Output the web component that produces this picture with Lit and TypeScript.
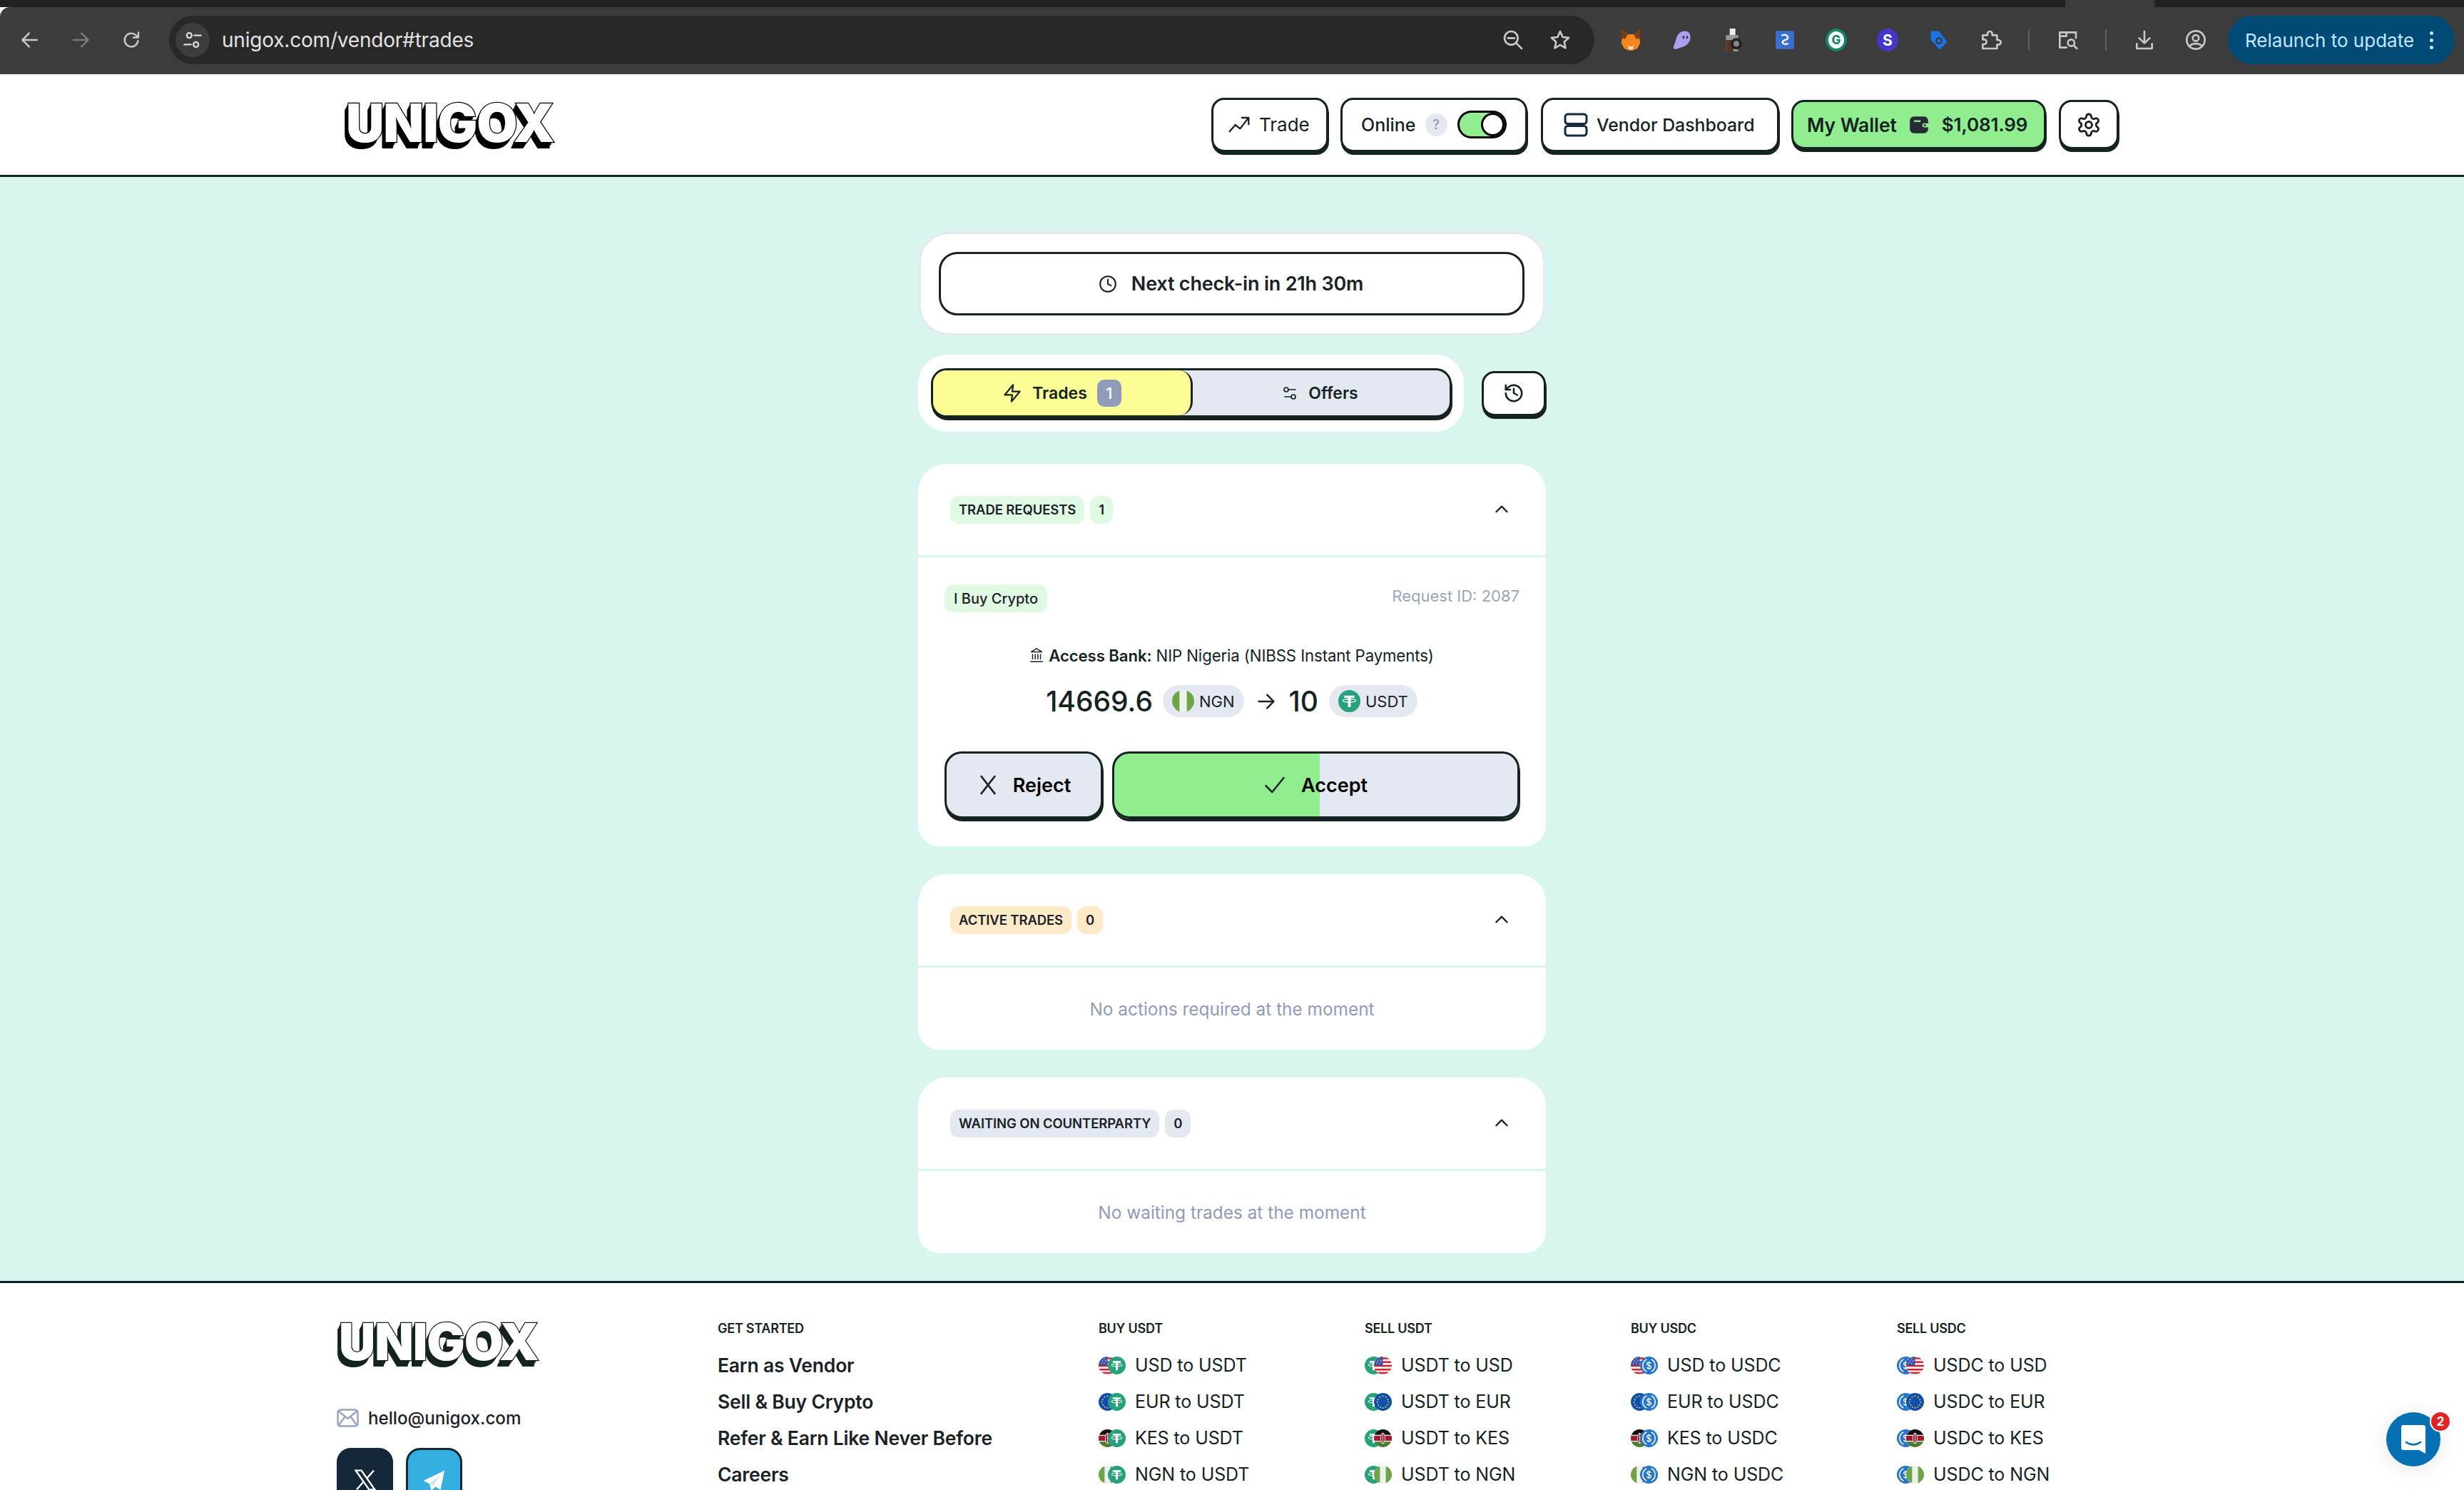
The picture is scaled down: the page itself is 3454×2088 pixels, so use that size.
import { LitElement, html, css, svg } from "lit";
import { customElement } from "lit/decorators.js";

const ic = (body: unknown, size: number, stroke = "currentColor", sw = 2, cls = "") => html`<svg class=${cls} width=${size} height=${size} viewBox="0 0 24 24" fill="none" stroke=${stroke} stroke-width=${sw} stroke-linecap="round" stroke-linejoin="round">${body}</svg>`;

const I = {
  back: svg`<path d="M20 12H4M11 4.500 3.500 12l7.500 7.500"/>`,
  forward: svg`<path d="M4 12h16M13 4.500l7.500 7.500-7.500 7.500"/>`,
  reload: svg`<path d="M19.500 13a7.500 7.500 0 1 1-2.200-6.300L20 9.200M20 3.500v5.700h-5.700"/>`,
  tune: svg`<circle cx="8" cy="6.500" r="3"/><path d="M14 6.500h8M2 17.500h8"/><circle cx="16" cy="17.500" r="3"/>`,
  zoom: svg`<circle cx="10" cy="10" r="7"/><path d="M6.500 10h7M15.500 15.500 21 21"/>`,
  star: svg`<path d="m12 3 2.700 6 6.300.7-4.700 4.300 1.300 6.500L12 17.200 6.400 20.500l1.300-6.500L3 9.700 9.300 9z"/>`,
  puzzle: svg`<path d="M4 7h5V5.500a2.500 2.500 0 0 1 5 0V7h5v5h1.500a2.500 2.500 0 0 1 0 5H19v4H4v-4.500h1.500a2.500 2.500 0 0 0 0-5H4z"/>`,
  tabSearch: svg`<path d="M11 20H4V4h17v6M4 8h7V4"/><circle cx="16" cy="15" r="3.500"/><path d="m19 18 3 3"/>`,
  download: svg`<path d="M12 3v12M6.500 10l5.500 5.500 5.500-5.500M4 16v5h16v-5"/>`,
  profile: svg`<circle cx="12" cy="12" r="9.500"/><circle cx="12" cy="10" r="3.200"/><path d="M5.500 18.500c3-3.500 10-3.500 13 0"/>`,
  trend: svg`<path d="M2 19l6-7 5 4 8.500-11M15 4.500h7v7"/>`,
  server: svg`<rect x="2" y="2" width="20" height="9" rx="2.500"/><rect x="2" y="13" width="20" height="9" rx="2.500"/>`,
  gear: svg`<path d="M12.220 2h-.44a2 2 0 0 0-2 2v.18a2 2 0 0 1-1 1.730l-.43.25a2 2 0 0 1-2 0l-.15-.08a2 2 0 0 0-2.730.730l-.22.380a2 2 0 0 0 .730 2.730l.15.1a2 2 0 0 1 1 1.720v.51a2 2 0 0 1-1 1.740l-.15.090a2 2 0 0 0-.730 2.730l.22.380a2 2 0 0 0 2.730.730l.15-.08a2 2 0 0 1 2 0l.43.25a2 2 0 0 1 1 1.730V20a2 2 0 0 0 2 2h.44a2 2 0 0 0 2-2v-.18a2 2 0 0 1 1-1.730l.43-.25a2 2 0 0 1 2 0l.15.08a2 2 0 0 0 2.730-.730l.22-.39a2 2 0 0 0-.730-2.730l-.15-.08a2 2 0 0 1-1-1.740v-.5a2 2 0 0 1 1-1.740l.15-.09a2 2 0 0 0 .730-2.730l-.22-.38a2 2 0 0 0-2.730-.730l-.15.08a2 2 0 0 1-2 0l-.43-.25a2 2 0 0 1-1-1.730V4a2 2 0 0 0-2-2z"/><circle cx="12" cy="12" r="3"/>`,
  clock: svg`<circle cx="12" cy="12" r="10"/><path d="M12 6v6l4 2"/>`,
  zap: svg`<path d="M13 2 3 14h9l-1 8 10-12h-9z"/>`,
  sliders: svg`<path d="M20 7h-9M14 17H5"/><circle cx="17" cy="17" r="3"/><circle cx="7" cy="7" r="3"/>`,
  history: svg`<path d="M3 12a9 9 0 1 0 9-9 9.750 9.750 0 0 0-6.740 2.740L3 8"/><path d="M3 3v5h5M12 7v5l4 2"/>`,
  chevron: svg`<path d="m5 15 7-7 7 7"/>`,
  bank: svg`<path d="M3 22h18M6 18v-7M10 18v-7M14 18v-7M18 18v-7M12 2l8 5H4z"/>`,
  arrow: svg`<path d="M3 12h18M13 4l8 8-8 8"/>`,
  x: svg`<path d="M5 3l14 18M19 3 5 21"/>`,
  check: svg`<path d="M2 13l7 7L22 4"/>`,
};

const usd = svg`<g>
  <rect width="24" height="24" fill="#f5f5f5"/>
  <path d="M0 2.500h24M0 7.500h24M0 12.500h24M0 17.500h24M0 22h24" stroke="#d8202f" stroke-width="2.400"/>
  <rect width="12" height="12" fill="#3a53a4"/>
  <path d="M3 3h1M7 3h1M5 6h1M9 6h1M3 9h1M7 9h1" stroke="#fff" stroke-width="1.300"/></g>`;
const eur = svg`<g>
  <rect width="24" height="24" fill="#0b4fb3"/>
  ${[[12,4],[16,5.500],[18.500,9],[19.500,12.500],[18,16],[15.500,19],[12,20],[8.500,19],[6,16],[4.500,12.500],[5.500,9],[8,5.500]].map(([x,y]) => svg`<circle cx=${x} cy=${y} r="1" fill="#f5c518"/>`)}</g>`;
const kes = svg`<g>
  <rect width="24" height="8" fill="#111"/><rect y="8" width="24" height="8" fill="#a3182b"/><rect y="16" width="24" height="8" fill="#4d7c2e"/>
  <path d="M0 8h24M0 16h24" stroke="#fff" stroke-width="1.200"/>
  <ellipse cx="12" cy="12" rx="3" ry="7" fill="#a3182b" stroke="#fff" stroke-width=".9"/><path d="M12 5v14" stroke="#fff" stroke-width=".8"/></g>`;
const ngn = svg`<g><rect width="24" height="24" fill="#eef0ee"/><rect width="8" height="24" fill="#6da544"/><rect x="16" width="8" height="24" fill="#6da544"/></g>`;
const usdt = svg`<g><rect width="24" height="24" fill="#26a17b"/>
  <path d="M6.500 6h11v2.500h-4v10h-3v-10h-4z" fill="#fff"/>
  <ellipse cx="12" cy="11.500" rx="7" ry="1.700" fill="none" stroke="#fff" stroke-width="1"/></g>`;
const usdc = svg`<g><rect width="24" height="24" fill="#2775ca"/>
  <path d="M9 3.800a9 9 0 0 0 0 16.400M15 3.800a9 9 0 0 1 0 16.400" fill="none" stroke="#fff" stroke-width="1.500"/>
  <path d="M14.800 9.500c-.5-1.200-1.500-1.700-2.800-1.700-1.500 0-2.700.8-2.700 2.100 0 3 5.600 1.300 5.600 4.200 0 1.300-1.300 2.100-2.900 2.100-1.400 0-2.500-.6-3-1.800M12 6.500v11" fill="none" stroke="#fff" stroke-width="1.200"/></g>`;

let uid = 0;
const coin = (art: unknown, size: number, cls = "") => {
  const id = `c${uid++}`;
  return html`<svg class=${cls} width=${size} height=${size} viewBox="0 0 24 24"><defs><clipPath id=${id}><circle cx="12" cy="12" r="12"/></clipPath></defs><g clip-path=${`url(#${id})`}>${art}</g></svg>`;
};

const CUR: Record<string, unknown> = { USD: usd, EUR: eur, KES: kes, NGN: ngn, USDT: usdt, USDC: usdc };

@customElement("app-root")
export class AppRoot extends LitElement {
  static styles = css`
    :host { display: block; position: relative; height: 100vh; overflow: hidden; font-family: Inter, "Liberation Sans", sans-serif; color: #14231f; background: #fff; }
    * { box-sizing: border-box; }
    svg { display: block; flex: none; }

    .strip { height: 10px; background: #202322; display: flex; justify-content: flex-end; }
    .strip-gap { width: 125px; margin-right: 434px; background: #3c3c3c; }
    .toolbar { height: 94px; background: #3c3c3c; display: flex; align-items: center; padding-bottom: 2px; border-radius: 14px 0 0 0; color: #c7c7c7; }
    .nav { width: 71px; display: flex; justify-content: center; }
    .nav.first { width: 77px; padding-left: 6px; }
    .nav.off { color: #7a7a7a; }
    .nav.last { margin-right: 18px; }
    .omni { width: 1998px; height: 68px; border-radius: 34px; background: #282828; display: flex; align-items: center; padding: 0 15px 0 9px; }
    .site { width: 48px; height: 48px; border-radius: 50%; background: #3c3c3c; display: flex; align-items: center; justify-content: center; color: #dcdcdc; margin-right: 17px; }
    .url { font-size: 28px; color: #e3e3e3; flex: 1; letter-spacing: -.2px; }
    .omni-ic { width: 66px; display: flex; justify-content: center; color: #c7c7c7; }
    .exts { display: flex; align-items: center; padding-left: 15px; }
    .ext { width: 72px; display: flex; justify-content: center; align-items: center; }
    .sep { width: 2px; height: 30px; background: #5f5f5f; margin: 0 17px; }
    .ext-s { width: 30px; height: 32px; border-radius: 50%; display: flex; align-items: center; justify-content: center; color: #fff; font-weight: 700; font-size: 21px; }
    .ext-s.g { background: #fff; color: #0f8a6e; border: 4px solid #11846b; font-size: 17px; font-weight: 800; }
    .ext-s.s { background: #4338ca; }
    .relaunch { margin-left: 9px; width: 318px; height: 68px; border-radius: 34px; background: #004a77; color: #c2e7ff; font-size: 26px; display: flex; align-items: center; justify-content: space-between; padding: 0 30px 0 24px; }
    .dots { display: flex; flex-direction: column; gap: 5px; }
    .dots i { width: 5px; height: 5px; border-radius: 50%; background: #c2e7ff; display: block; }

    .hdr { height: 144px; border-bottom: 3px solid #14231f; display: flex; align-items: center; justify-content: space-between; padding: 0 484px 0 485px; background: #fff; }
    .logo { font-family: Inter, "Liberation Sans", sans-serif; font-weight: 900; letter-spacing: -.015em; color: #fff; -webkit-text-stroke: 2.500px #000; paint-order: stroke fill; line-height: 1; white-space: nowrap; }
    .logo.top { font-size: 74px; padding-bottom: 6px; text-shadow: -1px 1px 0 #000, -2px 2px 0 #000, -3px 4px 0 #000, -4px 6px 0 #000, -5px 8px 0 #000, -5px 9px 0 #000; }
    .logo.bot { font-size: 71px; height: 72px; margin: -4px 0 0 3px; -webkit-text-stroke-color: #14231f; text-shadow: -1px 1px 0 #14231f, -2px 2px 0 #14231f, -3px 4px 0 #14231f, -4px 6px 0 #14231f, -5px 8px 0 #14231f, -5px 9px 0 #14231f; }
    .hdr-r { display: flex; align-items: center; }
    .btn { border: 3px solid #14231f; border-radius: 18px; box-shadow: 1px 4px 0 #14231f; background: #fff; display: flex; align-items: center; font-size: 25px; height: 76px; }
    .btn.trade { width: 164px; padding-left: 20px; gap: 12px; margin-right: 17px; font-size: 26px; }
    .btn.online { width: 262px; padding-left: 26px; margin-right: 19px; font-weight: 500; }
    .btn.vendor { width: 334px; padding-left: 28px; gap: 11px; margin-right: 17px; font-weight: 500; font-size: 24.800px; }
    .btn.wallet { width: 357px; height: 69px; background: #90ee90; font-weight: 600; font-size: 26.500px; padding-left: 19px; margin-right: 18px; letter-spacing: -.1px; }
    .btn.wallet .amt { margin-left: 18px; font-size: 26px; }
    .btn.wallet svg { margin-left: 17px; }
    .btn.gear { width: 84px; height: 69px; justify-content: center; }
    .q { width: 31px; height: 32px; border-radius: 50%; background: #e4e8f1; color: #8f9bb8; font-size: 19px; display: flex; align-items: center; justify-content: center; margin: 0 14px 0 13px; }
    .toggle { width: 69px; height: 39px; border: 3px solid #000; border-radius: 20px; background: #90ee90; display: flex; justify-content: flex-end; }
    .toggle i { width: 33px; height: 33px; border: 3px solid #000; border-radius: 50%; background: #fff; display: block; }

    .main { background: #d9f5ef; height: 1547px; padding-top: 77px; display: flex; flex-direction: column; align-items: center; }
    .col { width: 880px; display: flex; flex-direction: column; }
    .checkin { background: #fff; border: 3px solid #e4e8f1; border-radius: 42px; height: 145px; padding: 25px 26px 25px 25px; margin: 0 1px; }
    .checkin-in { height: 89px; border: 3px solid #1a2228; border-radius: 26px; display: flex; align-items: center; justify-content: center; gap: 20px; font-size: 27px; font-weight: 600; color: #1a2228; letter-spacing: -.2px; padding-right: 2px; }
    .tabrow { display: flex; align-items: center; margin-top: 27px; gap: 26px; }
    .tabcard { width: 765px; height: 108px; background: #fff; border-radius: 40px; padding: 19px 18px; }
    .tabs { width: 730px; height: 69px; border: 3px solid #14231f; border-radius: 22px; box-shadow: 1px 4px 0 #14231f; background: #e4e8f1; display: flex; font-size: 23px; font-weight: 600; }
    .tab { flex: 1; display: flex; align-items: center; justify-content: center; gap: 14px; padding-right: 4px; }
    .tab.on { flex: none; width: 364px; background: #fdfd96; border-radius: 19px; border-right: 3px solid #14231f; padding-right: 0; gap: 14px; }
    .tabn { width: 34px; height: 38px; border-radius: 10px; background: #8f9bb8; color: #fff; font-size: 22px; font-weight: 500; display: flex; align-items: center; justify-content: center; }
    .hist { width: 92px; height: 63px; border: 3px solid #14231f; border-radius: 18px; box-shadow: 1px 4px 0 #14231f; background: #fff; display: flex; align-items: center; justify-content: center; margin-left: -1px; }
    .card { background: #fff; border-radius: 40px 40px 30px 30px; }
    .card.first { margin-top: 45px; }
    .card.next { margin-top: 39px; }
    .chead { box-sizing: content-box; height: 128px; border-bottom: 3px solid #d9f5ef; display: flex; align-items: center; padding: 0 49px 0 45px; gap: 8px; }
    .chip { height: 39px; border-radius: 12px; padding: 0 12px; display: flex; align-items: center; font-size: 18.500px; font-weight: 600; color: #1a2228; letter-spacing: -.1px; }
    .chip.green { background: #e0f9e3; }
    .chip.orange { background: #fee9c9; }
    .chip.grey { background: #e4e8f1; }
    .chev { margin-left: auto; }
    .empty { height: 115px; display: flex; align-items: center; justify-content: center; font-size: 24.400px; color: #8f9bb8; }
    .req { padding: 38px 35px 39px 37px; display: flex; flex-direction: column; }
    .req-top { display: flex; justify-content: space-between; align-items: flex-start; height: 39px; }
    .tag { height: 39px; background: #e0f9e3; border-radius: 12px; padding: 0 13px; display: flex; align-items: center; font-size: 20px; font-weight: 500; color: #1a2228; }
    .rid { font-size: 22px; color: #9aa5c0; line-height: 32px; padding-right: 2px; }
    .bank { margin-top: 44px; height: 32px; display: flex; align-items: center; justify-content: center; gap: 6px; font-size: 22.200px; color: #14231f; letter-spacing: -.1px; padding-right: 4px; }
    .bank b { font-weight: 600; }
    .amount { margin-top: 26px; display: flex; align-items: center; justify-content: center; font-size: 39px; font-weight: 500; height: 45px; color: #14231f; padding-right: 3px; }
    .pill { height: 45px; border-radius: 23px; background: #e4e8f1; display: flex; align-items: center; gap: 7px; padding: 0 13px; font-size: 22px; font-weight: 400; color: #1a2228; }
    .pill.a { margin-left: 14px; }
    .pill.b { margin-left: 15px; }
    .arr { margin: 0 18px 0 17px; }
    .actions { display: flex; gap: 13px; margin-top: 48px; }
    .act { height: 94px; border: 3px solid #14231f; border-radius: 24px; box-shadow: 1px 4px 0 #14231f; background: #e4e8f1; display: flex; align-items: center; justify-content: center; font-size: 27px; font-weight: 600; color: #000; }
    .act.rej { width: 222px; gap: 19px; }
    .act.acc { width: 571px; gap: 22px; background: linear-gradient(90deg, #90ee90 51%, #e4e8f1 51%); }

    .site-foot { border-top: 3px solid #14231f; background: #fff; padding: 51px 0 0 472px; display: flex; }
    .fl { width: 534px; }
    .mail { display: flex; align-items: center; gap: 13px; margin-top: 55px; font-size: 24.200px; font-weight: 500; color: #1a2228; height: 30px; }
    .soc { display: flex; gap: 18px; margin-top: 27px; }
    .sb { width: 79px; height: 90px; border-radius: 20px; display: flex; justify-content: center; padding-top: 26px; border: 3px solid #14283a; }
    .sb.x { background: #14283a; }
    .sb.t { background: #37aee2; }
    .fc { width: 373px; display: flex; flex-direction: column; gap: 23px; }
    .fc.w { width: 534px; }
    .ft { font-size: 18px; font-weight: 600; height: 26px; line-height: 26px; margin-bottom: 1px; color: #14231f; letter-spacing: -.25px; white-space: nowrap; }
    .fa { height: 28px; line-height: 28px; font-size: 26.500px; font-weight: 600; color: #1a2228; white-space: nowrap; letter-spacing: -.2px; }
    .fr { height: 28px; display: flex; align-items: center; font-size: 25px; color: #14231f; white-space: nowrap; letter-spacing: -.1px; }
    .pair { width: 38px; height: 25px; position: relative; margin-right: 13px; flex: none; }
    .pair svg { position: absolute; top: 0; }
    .pair .p1 { left: 0; }
    .pair .p2 { left: 13px; }

    .chat { position: absolute; left: 3345px; top: 1979px; width: 76px; height: 76px; border-radius: 50%; background: #0570b2; display: flex; align-items: center; justify-content: center; box-shadow: 0 4px 30px rgba(0,0,0,.1); }
    .badge { position: absolute; right: -15px; top: -2px; width: 30px; height: 30px; border-radius: 50%; background: #e02424; border: 2px solid #fff; color: #fff; font-size: 17px; font-weight: 700; display: flex; align-items: center; justify-content: center; }
  `;

  private chrome() {
    return html`
      <div class="strip"><div class="strip-gap"></div></div>
      <div class="toolbar">
        <div class="nav first">${ic(I.back, 30)}</div>
        <div class="nav off">${ic(I.forward, 30)}</div>
        <div class="nav last">${ic(I.reload, 30)}</div>
        <div class="omni">
          <div class="site">${ic(I.tune, 28)}</div>
          <div class="url">unigox.com/vendor#trades</div>
          <div class="omni-ic">${ic(I.zoom, 32)}</div>
          <div class="omni-ic">${ic(I.star, 32)}</div>
        </div>
        <div class="exts">
          <div class="ext"><svg width="32" height="32" viewBox="0 0 24 24"><path d="M2 1l7 5h6l7-5-1 9 1 5-3 6-5 2h-4l-5-2-3-6 1-5z" fill="#f6851b"/><path d="M2 1l7 5-3 5-4-1zM22 1l-7 5 3 5 4-1z" fill="#763d16"/><path d="M9 18l3 1 3-1-1 4h-4z" fill="#e4e4e4"/></svg></div>
          <div class="ext"><svg width="30" height="32" viewBox="0 0 24 24"><path d="M3 22c-2-1 1-6 2-10C6 6 10 2 15 2c5 0 7 4 6 9-1 5-5 8-9 9-3 1-6 3-9 2z" fill="#ab9ff2"/><ellipse cx="13.500" cy="9" rx="1.100" ry="1.900" fill="#3c3c3c"/><ellipse cx="17.500" cy="9" rx="1.100" ry="1.900" fill="#3c3c3c"/></svg></div>
          <div class="ext"><svg width="32" height="32" viewBox="0 0 24 24"><rect x="8" y="0" width="6" height="7" fill="#eee"/><rect x="4" y="7" width="13" height="17" fill="#9a9a9a"/><rect x="4" y="12" width="8" height="12" fill="#5b3524"/><circle cx="15" cy="16" r="6" fill="#222"/><circle cx="15" cy="16" r="3" fill="#888"/></svg></div>
          <div class="ext"><svg width="28" height="30" viewBox="0 0 24 24"><rect x="1" y="1" width="22" height="22" rx="2" fill="#3a6fd0"/><path d="M8 7c4-3 9 0 7 4l-5 2c-3 2 2 6 6 3" fill="none" stroke="#fff" stroke-width="2"/></svg></div>
          <div class="ext"><div class="ext-s g">G</div></div>
          <div class="ext"><div class="ext-s s">S</div></div>
          <div class="ext"><svg width="30" height="32" viewBox="0 0 24 24"><path d="M3 2h9l9 12-8 9-10-11z" fill="#1a73e8"/><circle cx="12" cy="13" r="3" fill="none" stroke="#3c3c3c" stroke-width="2"/></svg></div>
          <div class="ext">${ic(I.puzzle, 32)}</div>
          <div class="sep"></div>
          <div class="ext">${ic(I.tabSearch, 32)}</div>
          <div class="sep"></div>
          <div class="ext">${ic(I.download, 32)}</div>
          <div class="ext">${ic(I.profile, 32)}</div>
        </div>
        <div class="relaunch">Relaunch to update <div class="dots"><i></i><i></i><i></i></div></div>
      </div>`;
  }

  private header() {
    return html`
      <header class="hdr">
        <div class="logo top">UNIGOX</div>
        <div class="hdr-r">
          <div class="btn trade">${ic(I.trend, 32, "#14231f", 1.700)}Trade</div>
          <div class="btn online">Online<span class="q">?</span><div class="toggle"><i></i></div></div>
          <div class="btn vendor">${ic(I.server, 36, "#152a3c", 2)}Vendor Dashboard</div>
          <div class="btn wallet">My Wallet
            <svg width="28" height="28" viewBox="0 0 24 24"><rect x="1" y="2" width="22" height="20" rx="5" fill="#272b33"/><rect x="6" y="6.500" width="8" height="2" fill="#90ee90"/><rect x="16" y="10" width="8" height="5" rx="2.500" fill="#90ee90"/><circle cx="19" cy="12.500" r="1.300" fill="#272b33"/></svg>
            <span class="amt">$1,081.99</span></div>
          <div class="btn gear">${ic(I.gear, 36, "#1a2228", 1.900)}</div>
        </div>
      </header>`;
  }

  private section(title: string, n: string, tone: string, msg: string) {
    return html`
      <section class="card next">
        <div class="chead"><span class="chip ${tone}">${title}</span><span class="chip ${tone}">${n}</span>${ic(I.chevron, 26, "#1a2228", 2.200, "chev")}</div>
        <div class="empty">${msg}</div>
      </section>`;
  }

  private main() {
    return html`
      <main class="main"><div class="col">
        <div class="checkin"><div class="checkin-in">${ic(I.clock, 26, "#1a2228", 1.900)}Next check-in in 21h 30m</div></div>
        <div class="tabrow">
          <div class="tabcard"><div class="tabs">
            <div class="tab on">${ic(I.zap, 28, "#14231f", 1.900)}Trades<span class="tabn">1</span></div>
            <div class="tab">${ic(I.sliders, 24, "#14231f", 1.700)}Offers</div>
          </div></div>
          <div class="hist">${ic(I.history, 30, "#14231f", 2)}</div>
        </div>
        <section class="card first">
          <div class="chead"><span class="chip green">TRADE REQUESTS</span><span class="chip green">1</span>${ic(I.chevron, 26, "#1a2228", 2.200, "chev")}</div>
          <div class="req">
            <div class="req-top"><span class="tag">I Buy Crypto</span><span class="rid">Request ID: 2087</span></div>
            <div class="bank">${ic(I.bank, 22, "#14231f", 1.600)}<span><b>Access Bank:</b> NIP Nigeria (NIBSS Instant Payments)</span></div>
            <div class="amount">14669.6
              <span class="pill a">${coin(ngn, 31)}NGN</span>
              <span class="arr">${ic(I.arrow, 28, "#1a2228", 2)}</span>10
              <span class="pill b">${coin(usdt, 31)}USDT</span>
            </div>
            <div class="actions">
              <div class="act rej">${ic(I.x, 32, "#1a2228", 2.100)}Reject</div>
              <div class="act acc">${ic(I.check, 30, "#1a2228", 2)}Accept</div>
            </div>
          </div>
        </section>
        ${this.section("ACTIVE TRADES", "0", "orange", "No actions required at the moment")}
        ${this.section("WAITING ON COUNTERPARTY", "0", "grey", "No waiting trades at the moment")}
      </div></main>`;
  }

  private column(title: string, rows: [string, string][]) {
    return html`<div class="fc"><div class="ft">${title}</div>
      ${rows.map(([a, b]) => html`<div class="fr"><span class="pair">${coin(CUR[a], 25, "p1")}${coin(CUR[b], 25, "p2")}</span>${a} to ${b}</div>`)}
    </div>`;
  }

  private footer() {
    const fiat = ["USD", "EUR", "KES", "NGN"];
    return html`
      <footer class="site-foot">
        <div class="fl">
          <div class="logo bot">UNIGOX</div>
          <div class="mail"><svg width="31" height="26" viewBox="0 0 31 26" fill="none" stroke="#9aa5c0" stroke-width="2.500"><rect x="1.500" y="1.500" width="28" height="23" rx="4"/><path d="M2 3l13.500 11L29 3M2 24l9-12M29 24l-9-12"/></svg>hello@unigox.com</div>
          <div class="soc">
            <div class="sb x"><svg width="32" height="32" viewBox="0 0 24 24"><path d="M2 2h6l14 20h-6z" fill="none" stroke="#fff" stroke-width="1.800"/><path d="M21 2 13.500 10.500M10.500 13.500 3 22" stroke="#fff" stroke-width="1.800"/></svg></div>
            <div class="sb t"><svg width="34" height="34" viewBox="0 0 24 24"><path d="M22 2 1 12l6 3 2 7 4-4 5 3z" fill="#fff"/><path d="m7 15 11-9-7 11" fill="#cde7f5"/></svg></div>
          </div>
        </div>
        <div class="fc w"><div class="ft">GET STARTED</div>
          <div class="fa">Earn as Vendor</div><div class="fa">Sell &amp; Buy Crypto</div><div class="fa">Refer &amp; Earn Like Never Before</div><div class="fa">Careers</div>
        </div>
        ${this.column("BUY USDT", fiat.map((f) => [f, "USDT"] as [string, string]))}
        ${this.column("SELL USDT", fiat.map((f) => ["USDT", f] as [string, string]))}
        ${this.column("BUY USDC", fiat.map((f) => [f, "USDC"] as [string, string]))}
        ${this.column("SELL USDC", fiat.map((f) => ["USDC", f] as [string, string]))}
      </footer>
      <div class="chat">
        <svg width="36" height="42" viewBox="0 0 36 42"><path d="M4 1h28a3 3 0 0 1 3 3v37l-9-5H4a3 3 0 0 1-3-3V4a3 3 0 0 1 3-3z" fill="#fff"/><path d="M8 25c6 4.500 14 4.500 20 0" fill="none" stroke="#0570b2" stroke-width="2.500" stroke-linecap="round"/></svg>
        <span class="badge">2</span>
      </div>`;
  }

  render() {
    return html`${this.chrome()}${this.header()}${this.main()}${this.footer()}`;
  }
}
